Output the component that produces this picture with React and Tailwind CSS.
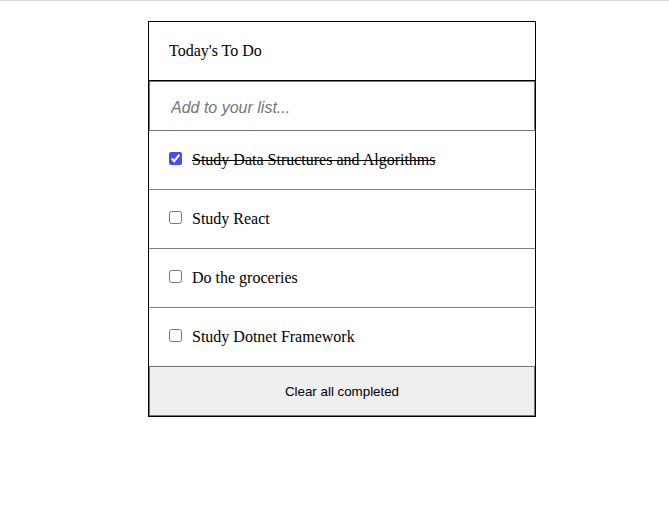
import { useState } from 'react'

const initialTodos = [
  { id: 1, text: 'Study Data Structures and Algorithms', done: true },
  { id: 2, text: 'Study React', done: false },
  { id: 3, text: 'Do the groceries', done: false },
  { id: 4, text: 'Study Dotnet Framework', done: false }
]

const App = () => {
  const [todos, setTodos] = useState(initialTodos)
  const [draft, setDraft] = useState('')

  const toggleTodo = (id) => {
    setTodos(todos.map(t => (t.id === id ? { ...t, done: !t.done } : t)))
  }

  const addTodo = (e) => {
    if (e.key !== 'Enter' || !draft.trim()) return
    setTodos([...todos, { id: Date.now(), text: draft.trim(), done: false }])
    setDraft('')
  }

  const clearCompleted = () => {
    setTodos(todos.filter(t => !t.done))
  }

  return (
    <div className="min-h-[507px] bg-white font-['Liberation_Serif',serif] text-black">
      <div className="h-px bg-[#dcdcdc]" />
      <div className="ml-[148px] mt-5 w-[388px] border border-black">
        <div className="flex h-[59px] items-center border-b border-black px-5 text-base">
          Today's To Do
        </div>
        <input
          value={draft}
          onChange={(e) => setDraft(e.target.value)}
          onKeyDown={addTodo}
          placeholder="Add to your list..."
          className="block h-[50px] w-full border border-[#767676] bg-white pl-[21px] pr-5 pt-1 font-['Liberation_Sans',Arial,sans-serif] text-base italic outline-none placeholder:text-[#757575]"
        />
        <ul>
          {todos.map((todo) => (
            <li key={todo.id} className="flex h-[59px] items-center border-b border-[#808080] px-5 text-base">
              <input
                type="checkbox"
                checked={todo.done}
                onChange={() => toggleTodo(todo.id)}
                className="mb-1 h-[13px] w-[13px] accent-[#4b4bf0]"
              />
              <span className={`ml-[10px] ${todo.done ? 'line-through' : ''}`}>{todo.text}</span>
            </li>
          ))}
        </ul>
        <button
          onClick={clearCompleted}
          className="-mt-px block h-[50px] w-full border border-[#767676] bg-[#efefef] pt-0.5 font-['Liberation_Sans',Arial,sans-serif] text-[13.33px] text-black"
        >
          Clear all completed
        </button>
      </div>
    </div>
  )
}

export default App
